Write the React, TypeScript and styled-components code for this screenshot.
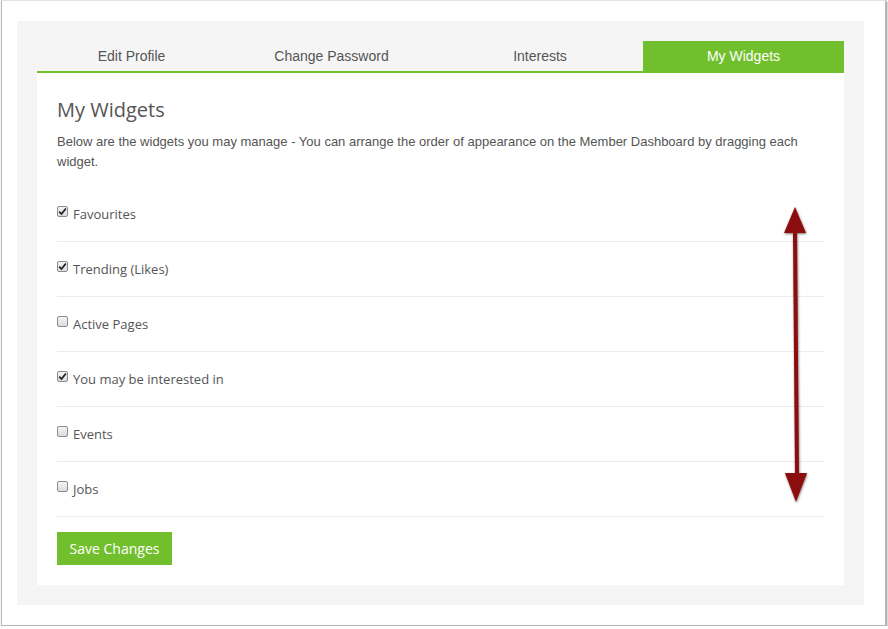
import React from "react";
import styled, { createGlobalStyle } from "styled-components";

const Global = createGlobalStyle`
  html, body { margin: 0; padding: 0; background: #fff; }
  body { font-family: "Open Sans", "Liberation Sans", sans-serif; }
  * { box-sizing: border-box; }
`;

const Frame = styled.div`
  margin-left: 1px;
  width: 885px;
  height: 626px;
  border: 1px solid #b5b5b5;
  border-top-color: #e2e2e2;
  box-shadow: 1px 1px 2px rgba(0, 0, 0, 0.45);
  background: #fff;
  padding: 20px 0 0 15px;
`;

const Panel = styled.div`
  width: 847px;
  height: 584px;
  background: #f5f5f5;
  padding: 20px;
  display: flex;
  flex-direction: column;
`;

const Tabs = styled.div`
  display: grid;
  grid-template-columns: 189px 211px 206px 201px;
  border-bottom: 2px solid #72bf2d;
  height: 32px;
`;

const Tab = styled.div<{ $active?: boolean }>`
  display: flex;
  align-items: center;
  justify-content: center;
  font-family: "Liberation Sans", Arial, sans-serif;
  font-size: 14px;
  color: ${(p) => (p.$active ? "#fff" : "#555")};
  background: ${(p) => (p.$active ? "#72bf2d" : "transparent")};
`;

const Content = styled.div`
  position: relative;
  flex: 1;
  background: #fff;
  padding: 23px 20px 20px;
  display: flex;
  flex-direction: column;
`;

const Heading = styled.h2`
  margin: 0;
  font-family: "Open Sans", sans-serif;
  font-weight: 400;
  font-size: 20px;
  line-height: 28px;
  color: #555;
`;

const Description = styled.p`
  margin: 8px 0 0;
  font-family: "Liberation Sans", Arial, sans-serif;
  font-size: 13px;
  line-height: 20px;
  color: #555;
  width: 760px;
`;

const List = styled.div`
  margin-top: 15px;
  display: flex;
  flex-direction: column;
`;

const Row = styled.label`
  display: flex;
  align-items: center;
  gap: 5px;
  height: 55px;
  border-bottom: 1px solid #ebebeb;
  font-family: "Open Sans", sans-serif;
  font-size: 13px;
  color: #555;
  padding-bottom: 1px;
`;

const Box = styled.span`
  width: 11px;
  height: 11px;
  border: 1px solid #8c8c8c;
  border-radius: 2px;
  background: linear-gradient(#f4f4f4, #dcdcdc);
  display: inline-flex;
  align-items: center;
  justify-content: center;
  margin-top: -4px;
  flex: none;
`;

const Button = styled.button`
  margin-top: 15px;
  align-self: flex-start;
  width: 115px;
  height: 33px;
  border: 0;
  background: #72bf2d;
  color: #fff;
  font-family: "Open Sans", sans-serif;
  font-size: 14px;
  padding: 0;
`;

const ArrowSvg = styled.svg`
  position: absolute;
  left: 743px;
  top: 130px;
  overflow: visible;
`;

const Check = ({ on }: { on: boolean }) => (
  <Box>
    {on && (
      <svg width="9" height="9" viewBox="0 0 9 9">
        <path d="M1.2 4.6 L3.5 7 L7.9 1.5" fill="none" stroke="#222" strokeWidth="1.8" />
      </svg>
    )}
  </Box>
);

const items: [string, boolean][] = [
  ["Favourites", true],
  ["Trending (Likes)", true],
  ["Active Pages", false],
  ["You may be interested in", true],
  ["Events", false],
  ["Jobs", false],
];

export default function App() {
  return (
    <>
      <Global />
      <Frame>
        <Panel>
          <Tabs>
            <Tab>Edit Profile</Tab>
            <Tab>Change Password</Tab>
            <Tab>Interests</Tab>
            <Tab $active>My Widgets</Tab>
          </Tabs>
          <Content>
            <Heading>My Widgets</Heading>
            <Description>
              Below are the widgets you may manage - You can arrange the order of appearance on the
              Member Dashboard by dragging each widget.
            </Description>
            <List>
              {items.map(([label, on]) => (
                <Row key={label}>
                  <Check on={on} />
                  {label}
                </Row>
              ))}
            </List>
            <Button>Save Changes</Button>
            <ArrowSvg width="30" height="305" viewBox="0 0 30 305">
              <defs>
                <filter id="sh" x="-50%" y="-10%" width="200%" height="120%">
                  <feDropShadow dx="0.5" dy="1" stdDeviation="1.2" floodColor="#000" floodOpacity="0.55" />
                </filter>
              </defs>
              <g filter="url(#sh)" fill="#8b0a0a">
                <polygon points="15,4 4,30 26,30" />
                <polygon points="13,29 17,29 19,271 15,271" />
                <polygon points="5,270 27,270 16,299" />
              </g>
            </ArrowSvg>
          </Content>
        </Panel>
      </Frame>
    </>
  );
}
